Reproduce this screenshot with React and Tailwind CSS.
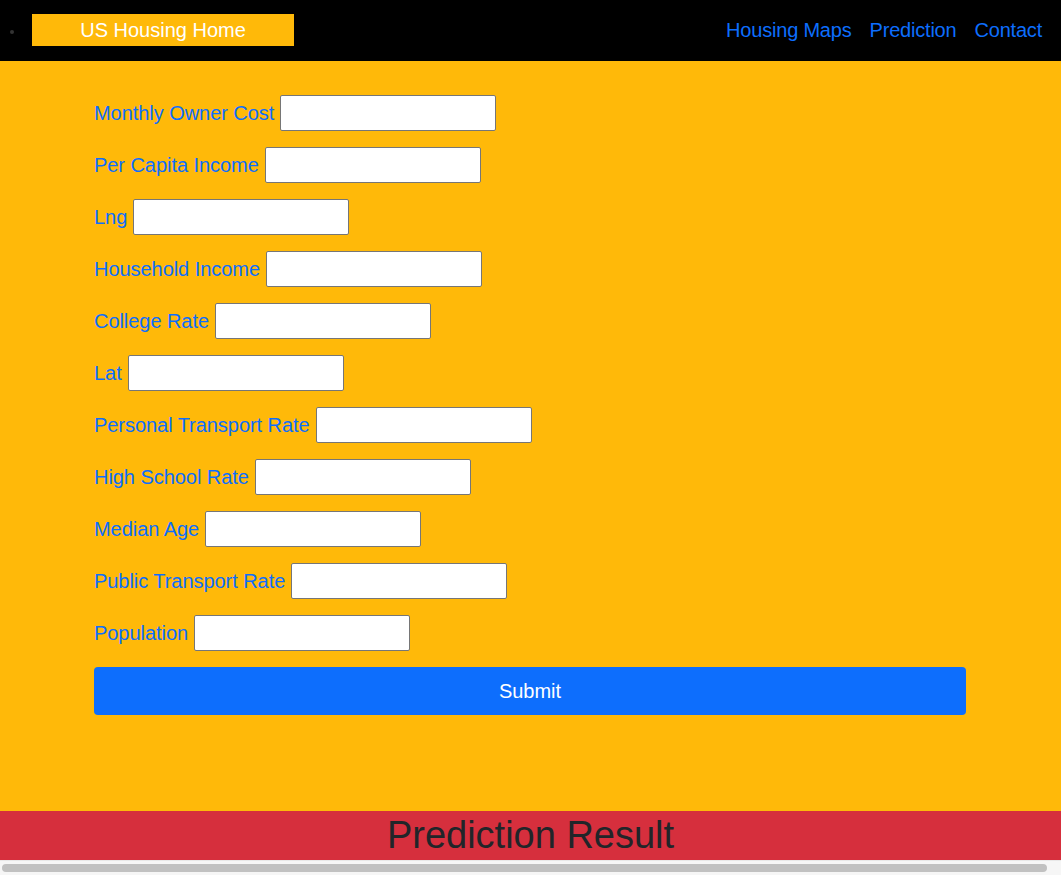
import React from "react";

const fields = [
  "Monthly Owner Cost",
  "Per Capita Income",
  "Lng",
  "Household Income",
  "College Rate",
  "Lat",
  "Personal Transport Rate",
  "High School Rate",
  "Median Age",
  "Public Transport Rate",
  "Population",
];

export default function App() {
  return (
    <div className="w-[1061px] h-[875px] overflow-hidden flex flex-col" style={{ fontFamily: '"Liberation Sans", Arial, sans-serif' }}>
      <nav className="h-[61px] bg-black flex items-start shrink-0">
        <span className="ml-[10px] mt-[30px] w-[4px] h-[4px] rounded-full bg-[#333]" />
        <a className="ml-[18px] mt-[14px] w-[262px] h-[32px] bg-[#ffb909] text-white text-[20px] flex items-center justify-center">
          US Housing Home
        </a>
        <div className="ml-auto mr-[19px] mt-[18px] flex items-center gap-[18px] text-[20px] leading-[24px] text-[#0d6efd] tracking-[-0.2px]">
          <a>Housing Maps</a>
          <a>Prediction</a>
          <a>Contact</a>
        </div>
      </nav>
      <main className="h-[750px] bg-[#ffb909] pt-[34px] px-[94px] shrink-0">
        <div className="w-[872px] flex flex-col gap-4">
          {fields.map((f) => (
            <div key={f} className="flex items-center gap-[6px] h-9">
              <label className="text-[20px] text-[#0d6efd] leading-[23px] tracking-[-0.05px]">{f}</label>
              <input className="w-[216px] h-9 bg-white border border-[#767676] rounded-[2px]" />
            </div>
          ))}
          <button className="h-12 w-full bg-[#0d6efd] text-white text-[20px] rounded-[4px]">Submit</button>
        </div>
      </main>
      <div className="h-[49px] bg-[#d62f3d] text-[#212529] text-[38px] leading-[49px] text-center shrink-0">
        Prediction Result
      </div>
      <div className="h-[15px] bg-[#f6f6f6] border-t border-[#e8e8e8] pt-[3px] px-[2px] shrink-0">
        <div className="h-[8px] w-[1045px] rounded-full bg-[#c1c1c1]" />
      </div>
    </div>
  );
}
